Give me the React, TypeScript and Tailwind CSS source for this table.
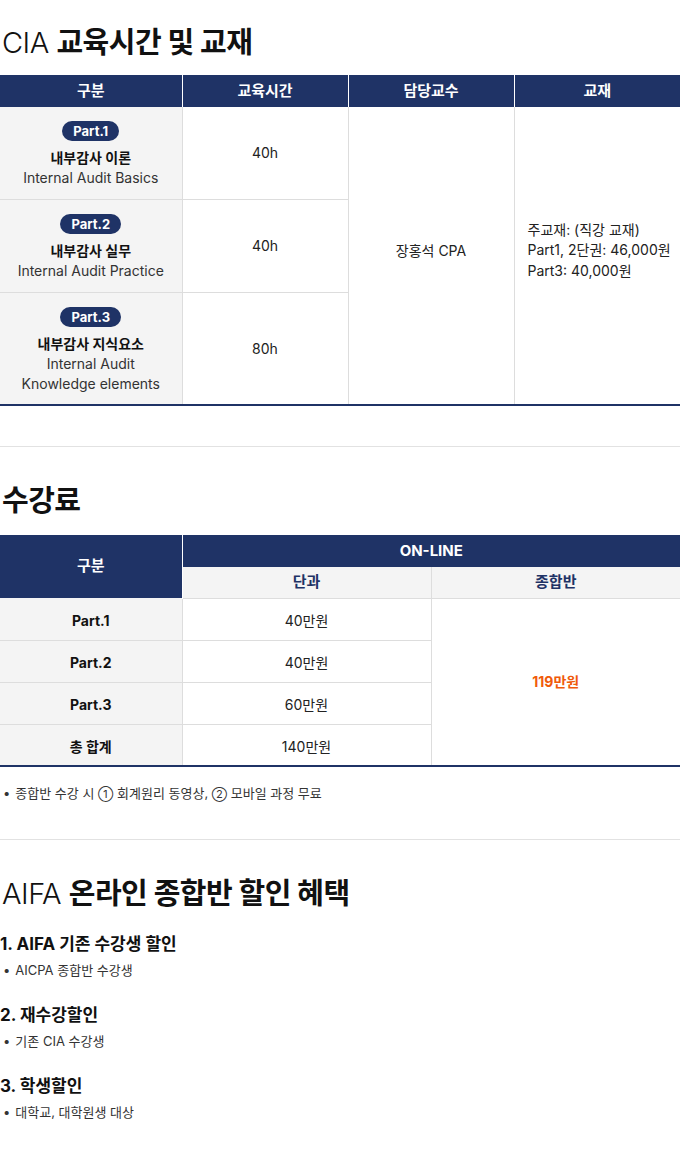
const font = "font-['Inter','Noto_Sans_CJK_KR',sans-serif]";

const parts = [
  { badge: "Part.1", title: "내부감사 이론", en: ["Internal Audit Basics"], hours: "40h", h: "h-[92px]" },
  { badge: "Part.2", title: "내부감사 실무", en: ["Internal Audit Practice"], hours: "40h", h: "h-[93px]" },
  { badge: "Part.3", title: "내부감사 지식요소", en: ["Internal Audit", "Knowledge elements"], hours: "80h", h: "h-[113px]" },
];

const fees = [
  { label: "Part.1", price: "40만원" },
  { label: "Part.2", price: "40만원" },
  { label: "Part.3", price: "60만원" },
  { label: "총 합계", price: "140만원" },
];

const discounts = [
  { title: "1. AIFA 기존 수강생 할인", note: "AICPA 종합반 수강생" },
  { title: "2. 재수강할인", note: "기존 CIA 수강생" },
  { title: "3. 학생할인", note: "대학교, 대학원생 대상" },
];

function Heading({ light, bold }: { light: string; bold: string }) {
  return (
    <h2 className="pl-[2px] text-[29px] leading-[34px] tracking-[-0.5px] text-[#111]">
      {light && <span className="font-light">{light} </span>}
      <span className="font-bold">{bold}</span>
    </h2>
  );
}

function Bullet({ children }: { children: React.ReactNode }) {
  return (
    <p className="flex gap-[5px] pl-[3px] text-[13px] leading-[16px] text-[#333]">
      <span>•</span>
      <span>{children}</span>
    </p>
  );
}

export default function App() {
  return (
    <div className={`${font} w-[680px] bg-white text-[#222]`}>
      {/* 교육시간 및 교재 */}
      <section className="pt-[26px] pb-[40px]">
        <Heading light="CIA" bold="교육시간 및 교재" />
        <table className="mt-[15px] w-full table-fixed border-collapse text-[14px]">
          <colgroup>
            <col className="w-[182px]" />
            <col />
            <col />
            <col />
          </colgroup>
          <thead>
            <tr className="h-[32px] bg-[#1f3366] text-[15px] font-bold text-white">
              <th className="border-r border-white">구분</th>
              <th className="border-r border-white">교육시간</th>
              <th className="border-r border-white">담당교수</th>
              <th>교재</th>
            </tr>
          </thead>
          <tbody className="border-b-2 border-[#1f3366]">
            {parts.map((p, i) => (
              <tr key={p.badge} className={p.h}>
                <td className={`bg-[#f4f4f4] pt-[4px] text-center align-middle ${i < 2 ? "border-b border-[#dddddd]" : ""} border-r border-[#dddddd]`}>
                  <div className="flex flex-col items-center">
                    <span className="mb-[7px] rounded-full bg-[#1f3366] px-[11px] text-[13px] font-bold leading-[20px] text-white">
                      {p.badge}
                    </span>
                    <span className="text-[14px] font-bold leading-[20px] text-[#111]">{p.title}</span>
                    {p.en.map((t) => (
                      <span key={t} className="text-[14px] leading-[20px] text-[#333] first-of-type:mt-px">{t}</span>
                    ))}
                  </div>
                </td>
                <td className={`text-center ${i < 2 ? "border-b border-[#dddddd]" : ""} border-r border-[#dddddd]`}>
                  {p.hours}
                </td>
                {i === 0 && (
                  <>
                    <td rowSpan={3} className="border-r border-[#dddddd] pb-[10px] text-center">
                      장홍석 CPA
                    </td>
                    <td rowSpan={3} className="pb-[10px] pl-[13px] text-left leading-[20.5px]">
                      <div>주교재: (직강 교재)</div>
                      <div>Part1, 2단권: 46,000원</div>
                      <div>Part3: 40,000원</div>
                    </td>
                  </>
                )}
              </tr>
            ))}
          </tbody>
        </table>
      </section>

      <div className="h-px bg-[#e2e2e2]" />

      {/* 수강료 */}
      <section className="pt-[37px] pb-[37px]">
        <Heading light="" bold="수강료" />
        <table className="mt-[17px] w-full table-fixed border-collapse text-[14px]">
          <colgroup>
            <col className="w-[182px]" />
            <col className="w-[249px]" />
            <col />
          </colgroup>
          <thead>
            <tr className="h-[32px]">
              <th rowSpan={2} className="border-r border-white bg-[#1f3366] text-[15px] font-bold text-white">
                구분
              </th>
              <th colSpan={2} className="bg-[#1f3366] text-[15px] font-bold text-white">ON-LINE</th>
            </tr>
            <tr className="h-[31px] bg-[#f4f4f4] text-[15px] font-bold text-[#1f3366]">
              <th className="border-r border-b border-[#dddddd]">단과</th>
              <th className="border-b border-[#dddddd]">종합반</th>
            </tr>
          </thead>
          <tbody className="border-b-2 border-[#1f3366]">
            {fees.map((f, i) => (
              <tr key={f.label} className="h-[42px]">
                <td className={`border-r border-[#dddddd] bg-[#f4f4f4] pt-[3px] text-center font-bold text-[#111] ${i < 3 ? "border-b" : ""}`}>
                  {f.label}
                </td>
                <td className={`border-r border-[#dddddd] pt-[3px] text-center ${i < 3 ? "border-b" : ""}`}>{f.price}</td>
                {i === 0 && (
                  <td rowSpan={4} className="text-center font-bold text-[#f05a0a]">
                    119만원
                  </td>
                )}
              </tr>
            ))}
          </tbody>
        </table>
        <div className="mt-[18px]">
          <Bullet>
            종합반 수강 시 <span className="text-[11px]">①</span> 회계원리 동영상,{" "}
            <span className="text-[11px]">②</span> 모바일 과정 무료
          </Bullet>
        </div>
      </section>

      <div className="h-px bg-[#e2e2e2]" />

      {/* 할인 혜택 */}
      <section className="pt-[37px] pb-[40px]">
        <Heading light="AIFA" bold="온라인 종합반 할인 혜택" />
        <div className="mt-[21px] flex flex-col gap-[25px]">
          {discounts.map((d) => (
            <div key={d.title}>
              <h3 className="text-[17px] font-bold leading-[24px] text-[#111]">{d.title}</h3>
              <div className="mt-[6px]">
                <Bullet>{d.note}</Bullet>
              </div>
            </div>
          ))}
        </div>
      </section>
    </div>
  );
}
